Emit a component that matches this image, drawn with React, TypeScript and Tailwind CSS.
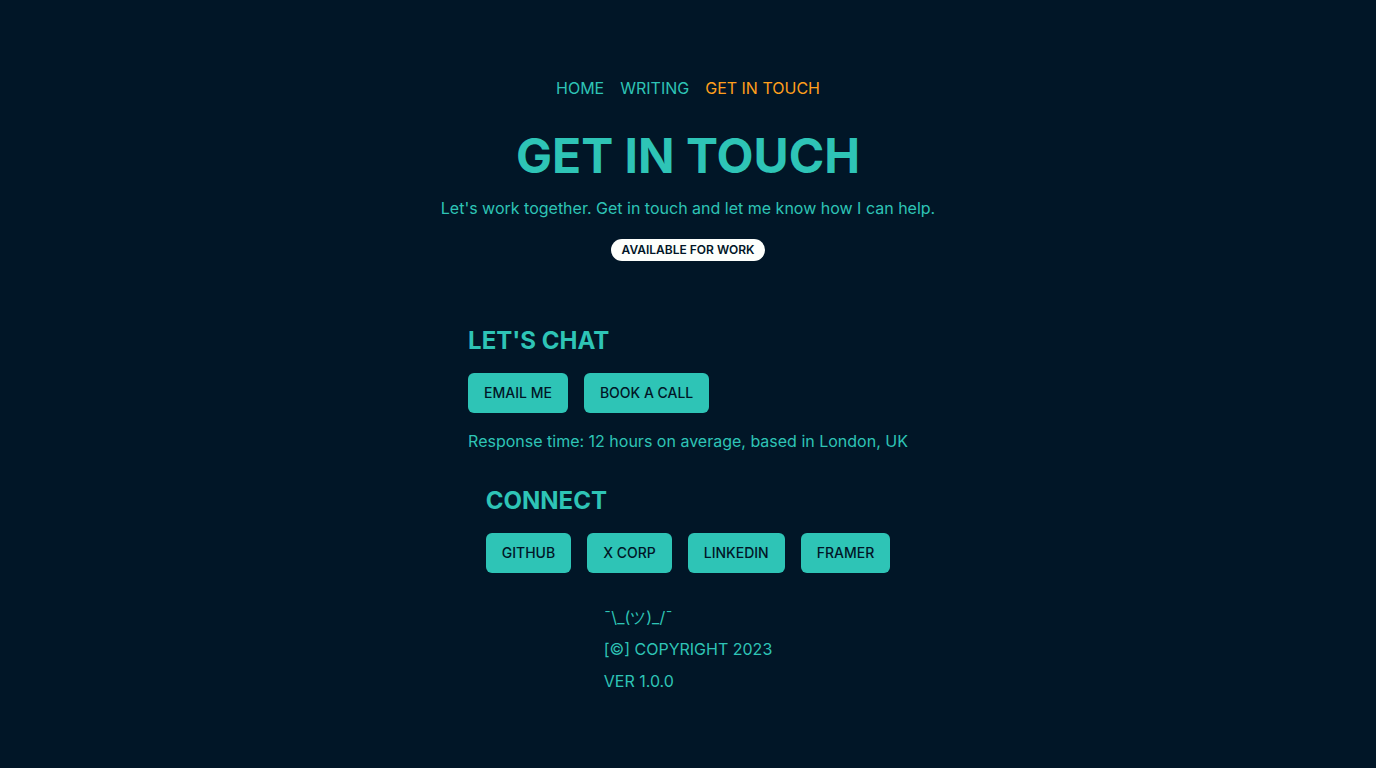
const font = { fontFamily: "Inter, 'Noto Sans', sans-serif" };

function Btn({ label }: { label: string }) {
  return (
    <a className="rounded-md bg-[#2ec4b6] px-4 py-2.5 text-sm font-medium text-[#011627] cursor-pointer">
      {label}
    </a>
  );
}

export default function App() {
  return (
    <div className="min-h-screen bg-[#011627] text-[#2ec4b6]" style={font}>
      <nav className="flex justify-center gap-4 pt-[76px] text-base">
        <a>HOME</a>
        <a>WRITING</a>
        <a className="text-[#ff9f1c]">GET IN TOUCH</a>
      </nav>

      <header className="flex flex-col items-center">
        <h1 className="mt-8 text-5xl font-bold">GET IN TOUCH</h1>
        <p className="mt-4 text-base">
          Let's work together. Get in touch and let me know how I can help.
        </p>
        <span className="mt-[19px] rounded-full bg-[#fdfffc] px-[11px] py-[3px] text-xs font-semibold text-[#011627]">
          AVAILABLE FOR WORK
        </span>
      </header>

      {/* Let's chat */}
      <section className="mx-auto mt-16 w-fit">
        <h2 className="text-2xl font-bold">LET'S CHAT</h2>
        <div className="mt-4 flex gap-4">
          <Btn label="EMAIL ME" />
          <Btn label="BOOK A CALL" />
        </div>
        <p className="mt-4">Response time: 12 hours on average, based in London, UK</p>
      </section>

      {/* Connect */}
      <section className="mx-auto mt-8 w-fit">
        <h2 className="text-2xl font-bold">CONNECT</h2>
        <div className="mt-4 flex gap-4">
          <Btn label="GITHUB" />
          <Btn label="X CORP" />
          <Btn label="LINKEDIN" />
          <Btn label="FRAMER" />
        </div>
      </section>

      <footer className="mx-auto mt-8 flex w-fit flex-col gap-2 pb-16">
        <span>¯\_(ツ)_/¯</span>
        <span>[©] COPYRIGHT 2023</span>
        <span>VER 1.0.0</span>
      </footer>
    </div>
  );
}
